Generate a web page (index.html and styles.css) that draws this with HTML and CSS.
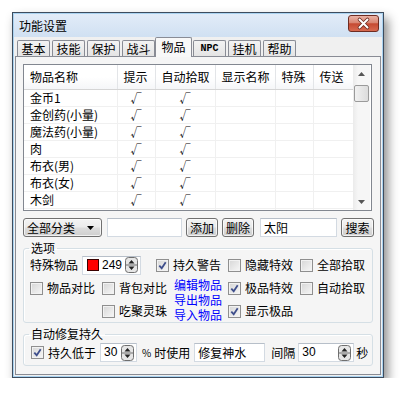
FILE: index.html
```html
<!DOCTYPE html>
<html lang="zh-CN">
<head>
    <meta charset="UTF-8">
    <title>功能设置</title>
    <link rel="stylesheet" href="styles.css">
</head>
<body>
<div class="window">
    <div class="titlebar">
        <span class="title">功能设置</span>
        <div class="close">
            <svg width="29" height="15" viewBox="0 0 29 15">
                <path d="M10.5 3.5l8 8M18.5 3.5l-8 8" stroke="#6b2a20" stroke-width="3.6" stroke-linecap="round"/>
                <path d="M10.5 3.5l8 8M18.5 3.5l-8 8" stroke="#fff" stroke-width="2" stroke-linecap="round"/>
            </svg>
        </div>
    </div>
    <div class="client">
        <div class="tabs">
            <div class="tab">基本</div>
            <div class="tab">技能</div>
            <div class="tab">保护</div>
            <div class="tab">战斗</div>
            <div class="tab active">物品</div>
            <div class="tab npc">NPC</div>
            <div class="tab">挂机</div>
            <div class="tab">帮助</div>
        </div>
        <div class="page">
            <div class="list">
                <div class="list-body">
                    <table class="grid">
                        <thead>
                            <tr>
                                <th class="c-name">物品名称</th>
                                <th class="c-tip">提示</th>
                                <th class="c-pick">自动拾取</th>
                                <th class="c-show">显示名称</th>
                                <th class="c-spec">特殊</th>
                                <th class="c-tele">传送</th>
                            </tr>
                        </thead>
                        <tbody>
                            <tr><td>金币1</td><td class="tick">√</td><td class="tick">√</td><td></td><td></td><td></td></tr>
                            <tr><td>金创药(小量)</td><td class="tick">√</td><td class="tick">√</td><td></td><td></td><td></td></tr>
                            <tr><td>魔法药(小量)</td><td class="tick">√</td><td class="tick">√</td><td></td><td></td><td></td></tr>
                            <tr><td>肉</td><td class="tick">√</td><td class="tick">√</td><td></td><td></td><td></td></tr>
                            <tr><td>布衣(男)</td><td class="tick">√</td><td class="tick">√</td><td></td><td></td><td></td></tr>
                            <tr><td>布衣(女)</td><td class="tick">√</td><td class="tick">√</td><td></td><td></td><td></td></tr>
                            <tr><td>木剑</td><td class="tick">√</td><td class="tick">√</td><td></td><td></td><td></td></tr>
                            <tr><td>铁剑</td><td class="tick">√</td><td class="tick">√</td><td></td><td></td><td></td></tr>
                        </tbody>
                    </table>
                </div>
                <div class="vscroll">
                    <div class="sb-arrow"><svg width="7" height="4" viewBox="0 0 7 4"><path d="M0 4h7L3.5 0z" fill="#555"/></svg></div>
                    <div class="sb-thumb"></div>
                    <div class="sb-track"></div>
                    <div class="sb-arrow"><svg width="7" height="4" viewBox="0 0 7 4"><path d="M0 0h7L3.5 4z" fill="#555"/></svg></div>
                </div>
            </div>

            <div class="toolbar">
                <div class="combo">全部分类<svg width="7" height="4" viewBox="0 0 7 4"><path d="M0 0h7L3.5 4z" fill="#000"/></svg></div>
                <div class="field w-filter"></div>
                <div class="btn">添加</div>
                <div class="btn">删除</div>
                <div class="field w-search">太阳</div>
                <div class="btn">搜索</div>
            </div>

            <fieldset class="group options">
                <legend>选项</legend>
                <div class="opt-grid">
                    <div class="special">
                        特殊物品
                        <div class="field color-field">
                            <span class="swatch"></span><span class="num">249</span>
                            <svg class="spin" width="13" height="16" viewBox="0 0 13 16"><rect x="0.5" y="0.5" width="12" height="15" rx="3" fill="#e6e6e6" stroke="#6f6f6f"/><path d="M1 8h11" stroke="#6f6f6f"/><path d="M3.5 6.5h6L6.5 3z M3.5 9.5h6L6.5 13z" fill="#222"/></svg>
                        </div>
                    </div>
                    <label class="check"><span class="cb on"><svg width="11" height="11" viewBox="0 0 11 11"><path d="M2.3 5.6l2.4 2.6 4-6" fill="none" stroke="#3f4f8c" stroke-width="1.8"/></svg></span>持久警告</label>
                    <label class="check"><span class="cb"></span>隐藏特效</label>
                    <label class="check"><span class="cb"></span>全部拾取</label>

                    <label class="check"><span class="cb"></span>物品对比</label>
                    <label class="check"><span class="cb"></span>背包对比</label>
                    <div class="links">
                        <a href="#">编辑物品</a>
                        <a href="#">导出物品</a>
                        <a href="#">导入物品</a>
                    </div>
                    <label class="check"><span class="cb on"><svg width="11" height="11" viewBox="0 0 11 11"><path d="M2.3 5.6l2.4 2.6 4-6" fill="none" stroke="#3f4f8c" stroke-width="1.8"/></svg></span>极品特效</label>
                    <label class="check"><span class="cb"></span>自动拾取</label>

                    <label class="check c2"><span class="cb"></span>吃聚灵珠</label>
                    <label class="check c4"><span class="cb on"><svg width="11" height="11" viewBox="0 0 11 11"><path d="M2.3 5.6l2.4 2.6 4-6" fill="none" stroke="#3f4f8c" stroke-width="1.8"/></svg></span>显示极品</label>
                </div>
            </fieldset>

            <fieldset class="group repair">
                <legend>自动修复持久</legend>
                <div class="repair-row">
                    <label class="check"><span class="cb on"><svg width="11" height="11" viewBox="0 0 11 11"><path d="M2.3 5.6l2.4 2.6 4-6" fill="none" stroke="#3f4f8c" stroke-width="1.8"/></svg></span>持久低于</label>
                    <div class="field spin-field w-low">
                        <span class="num">30</span>
                        <svg class="spin" width="13" height="16" viewBox="0 0 13 16"><rect x="0.5" y="0.5" width="12" height="15" rx="3" fill="#e6e6e6" stroke="#6f6f6f"/><path d="M1 8h11" stroke="#6f6f6f"/><path d="M3.5 6.5h6L6.5 3z M3.5 9.5h6L6.5 13z" fill="#222"/></svg>
                    </div>
                    <span class="pct">%</span><span>时使用</span>
                    <div class="field w-item">修复神水</div>
                    <span>间隔</span>
                    <div class="field spin-field w-gap">
                        <span class="num">30</span>
                        <svg class="spin" width="13" height="16" viewBox="0 0 13 16"><rect x="0.5" y="0.5" width="12" height="15" rx="3" fill="#e6e6e6" stroke="#6f6f6f"/><path d="M1 8h11" stroke="#6f6f6f"/><path d="M3.5 6.5h6L6.5 3z M3.5 9.5h6L6.5 13z" fill="#222"/></svg>
                    </div>
                    <span>秒</span>
                </div>
            </fieldset>
        </div>
    </div>
</div>
</body>
</html>
```

FILE: styles.css
```css
body {
    margin: 0;
    padding: 12px 0 0 12px;
    background-color: #ffffff;
    font-family: "Noto Sans CJK SC", "Liberation Sans", sans-serif;
    font-size: 12px;
    line-height: 14px;
    color: #000;
}
.window {
    width: 372px;
    height: 366px;
    box-sizing: border-box;
    border: 1px solid #3d4c5e;
    padding: 1px;
    background-color: #a9d2f0;
    box-shadow: 4px 6px 10px rgba(0, 0, 0, 0.45);
    display: flex;
    flex-direction: column;
    overflow: hidden;
}
.titlebar {
    height: 23px;
    display: flex;
    align-items: center;
    padding-left: 5px;
    background: linear-gradient(#e2ecf8, #d0e0f2);
}
.close {
    margin-left: auto;
    margin-right: 3px;
    align-self: flex-start;
    margin-top: 1px;
    width: 31px;
    height: 17px;
    box-sizing: border-box;
    border: 1px solid #6e2c22;
    border-radius: 3px;
    background: linear-gradient(#eab3a6, #d98672 45%, #c54a32 52%, #d86a50);
    display: flex;
    align-items: center;
    justify-content: center;
}
.client {
    flex: 1;
    background-color: #f0f0f0;
    padding: 0 1px 1px;
    display: flex;
    flex-direction: column;
}

/* tabs */
.tabs {
    display: flex;
    align-items: flex-end;
    height: 19px;
    padding-left: 2px;
}
.tab {
    width: 33px;
    height: 16px;
    margin-left: 2px;
    box-sizing: border-box;
    border: 1px solid #898c95;
    border-bottom: none;
    border-radius: 2px 2px 0 0;
    background: linear-gradient(#f3f3f3, #e4e4e4);
    text-align: center;
    line-height: 15px;
}
.tab:first-child {
    margin-left: 0;
}
.tab.active {
    position: relative;
    z-index: 1;
    width: 37px;
    height: 20px;
    margin: 0 -1px -1px 0;
    background: #f8f8f8;
    line-height: 17px;
}
.tab.npc {
    font-family: "Liberation Mono", monospace;
    font-weight: bold;
    font-size: 10px;
}
.page {
    flex: 1;
    border: 1px solid #898c95;
    background-color: #f5f5f5;
    padding: 7px 0 0 7px;
}

/* list view */
.list {
    display: flex;
    width: 349px;
    height: 147px;
    box-sizing: border-box;
    border: 1px solid #828790;
    background-color: #ffffff;
}
.list-body {
    width: 329px;
    overflow: hidden;
}
.grid {
    width: 329px;
    table-layout: fixed;
    border-collapse: collapse;
}
.grid th {
    height: 24px;
    padding: 0 0 0 6px;
    font-weight: normal;
    text-align: left;
    background: linear-gradient(#ffffff 50%, #f5f6f8);
    border-right: 1px solid #e3e5e8;
    border-bottom: 1px solid #d5d5d5;
    box-sizing: border-box;
}
.grid td {
    height: 16px;
    padding: 0 0 0 6px;
    border-right: 1px solid #f0f0f0;
    border-bottom: 1px solid #f0f0f0;
    white-space: nowrap;
}
.grid td.tick {
    padding: 0;
    text-align: center;
    font-size: 11px;
}
.c-name { width: 93px; }
.c-tip { width: 38px; }
.c-pick { width: 60px; }
.c-show { width: 60px; }
.c-spec { width: 38px; }
.c-tele { width: 40px; }
.vscroll {
    width: 17px;
    display: flex;
    flex-direction: column;
    background: linear-gradient(90deg, #ebebeb, #f6f6f6 30%, #f6f6f6);
}
.sb-arrow {
    height: 17px;
    display: flex;
    align-items: center;
    justify-content: center;
}
.sb-thumb {
    height: 15px;
    margin: 3px 1px 0;
    border: 1px solid #9a9a9a;
    border-radius: 2px;
    background: linear-gradient(90deg, #f1f1f1, #dcdcdc);
}
.sb-track {
    flex: 1;
}

/* toolbar */
.toolbar {
    display: flex;
    gap: 4px;
    margin-top: 7px;
    height: 19px;
}
.combo,
.btn {
    box-sizing: border-box;
    height: 19px;
    border: 1px solid #707070;
    border-radius: 3px;
    background: linear-gradient(#f3f3f3, #ebebeb 48%, #dddddd 52%, #cfcfcf);
    box-shadow: inset 0 0 0 1px rgba(255, 255, 255, 0.7);
    line-height: 17px;
}
.combo {
    width: 79px;
    padding-left: 3px;
    display: flex;
    align-items: center;
    justify-content: space-between;
    padding-right: 7px;
}
.btn {
    width: 32px;
    text-align: center;
}
.btn:last-child {
    width: 33px;
}
.field {
    box-sizing: border-box;
    height: 19px;
    border: 1px solid #d3dae2;
    border-top-color: #b7bfc9;
    background-color: #ffffff;
    padding-left: 3px;
    line-height: 17px;
}
.w-filter { width: 75px; margin-left: 1px; }
.w-search { width: 77px; margin-left: 2px; }

/* group boxes */
.group {
    margin: 5px 0 0;
    padding: 0;
    width: 350px;
    box-sizing: border-box;
    border: 1px solid #d5dfe5;
    border-radius: 3px;
    box-shadow: inset 1px 1px 0 #ffffff;
}
.group legend {
    margin-left: 5px;
    padding: 0 2px;
    line-height: 12px;
}
.opt-grid {
    display: grid;
    grid-template-columns: 72px 54px 72px 72px auto;
    grid-template-rows: 22px 24px 22px;
    padding-left: 6px;
    align-items: center;
}
.special {
    grid-column: 1 / 3;
    display: flex;
    align-items: center;
    white-space: nowrap;
}
.color-field {
    width: 59px;
    margin-left: 4px;
    display: flex;
    align-items: center;
}
.swatch {
    width: 12px;
    height: 12px;
    box-sizing: border-box;
    border: 1px solid #3a0000;
    background-color: #ff0000;
    margin: 0 3px 0 1px;
}
.num {
    font-family: "Liberation Sans", sans-serif;
    font-size: 12px;
}
.spin {
    margin-left: auto;
    margin-right: 2px;
    display: block;
}
.check {
    display: flex;
    align-items: center;
    gap: 4px;
    white-space: nowrap;
}
.cb {
    width: 13px;
    height: 13px;
    box-sizing: border-box;
    border: 1px solid #8f8f8f;
    background: linear-gradient(135deg, #d6d6d6, #f7f7f7);
    box-shadow: inset 0 0 0 1px #f2f2f2;
    display: flex;
    align-items: center;
    justify-content: center;
    flex: none;
}
.c2 { grid-column: 2; }
.c4 { grid-column: 4; }
.links {
    grid-column: 3;
    grid-row: 2 / 4;
    align-self: start;
    padding: 1px 0 0 18px;
    display: flex;
    flex-direction: column;
    line-height: 15px;
}
.links a {
    color: #0000ff;
    text-decoration: none;
    white-space: nowrap;
}
.repair-row {
    display: flex;
    align-items: center;
    padding: 3px 0 3px 7px;
    white-space: nowrap;
}
.spin-field {
    display: flex;
    align-items: center;
}
.repair-row .check {
    margin-right: 4px;
}
.w-low { width: 37px; margin-right: 5px; }
.pct { font-size: 10px; margin-right: 3px; }
.w-item { width: 71px; margin: 0 6px 0 4px; }
.w-gap { width: 56px; margin: 0 2px 0 3px; }
```
